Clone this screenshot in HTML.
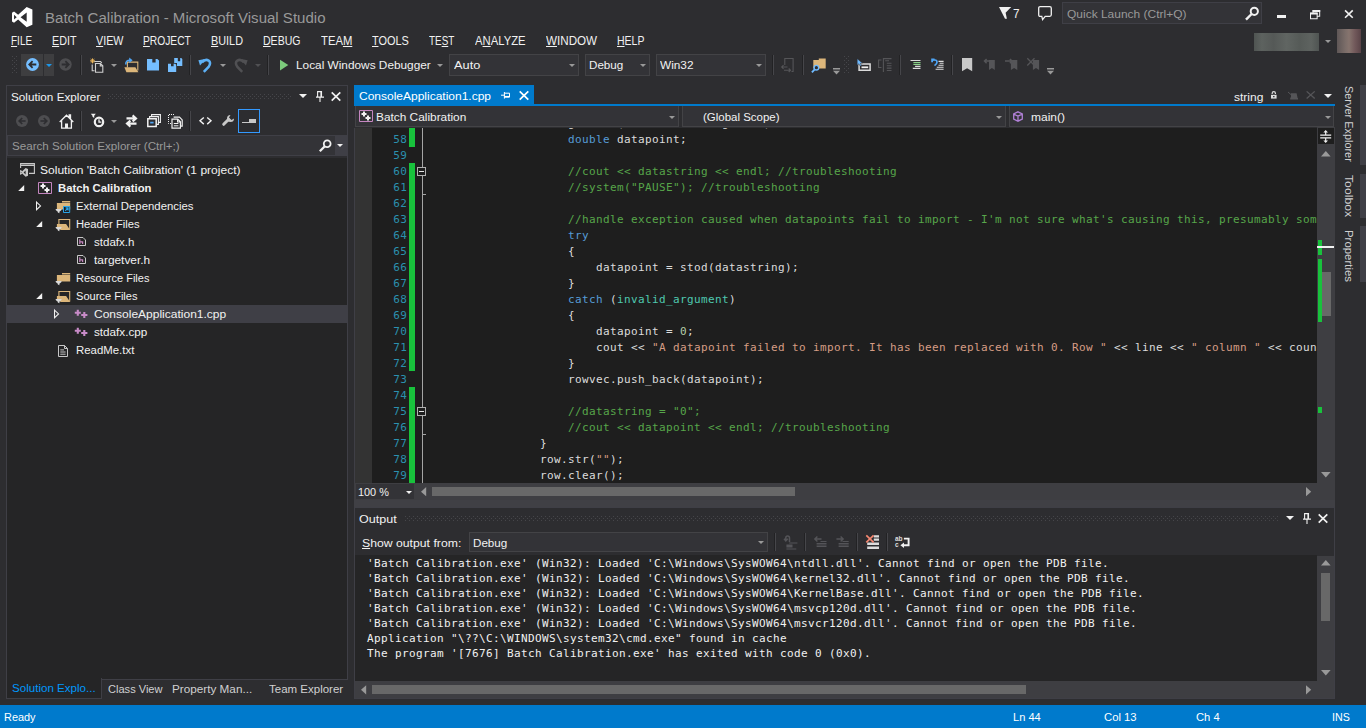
<!DOCTYPE html>
<html lang="en"><head><meta charset="utf-8"><title>Batch Calibration - Microsoft Visual Studio</title>
<style>
html,body{margin:0;padding:0;}
body{width:1366px;height:728px;overflow:hidden;background:#2d2d30;position:relative;font-family:"Liberation Sans", "DejaVu Sans", sans-serif;font-size:12px;color:#f1f1f1;}
.a{position:absolute;}
.t{position:absolute;white-space:nowrap;line-height:20px;height:20px;}
.b{position:absolute;box-sizing:border-box;}
svg{position:absolute;overflow:visible;}
.code{position:absolute;font-family:"DejaVu Sans Mono", "Liberation Mono", monospace;font-size:11px;letter-spacing:0.3775px;white-space:pre;color:#dcdcdc;}
.code div{height:16px;line-height:16px;}
.ln{color:#2b91af;}
.k{color:#569cd6;} .c{color:#57a64a;} .s{color:#d69d85;} .ty{color:#4ec9b0;} .n{color:#b5cea8;} .i{color:#c8c8c8;}
.out{position:absolute;font-family:"DejaVu Sans Mono", "Liberation Mono", monospace;font-size:11px;letter-spacing:0.3775px;white-space:pre;color:#f1f1f1;}
.out div{height:15px;line-height:15px;}
.grip{position:absolute;height:5px;background-image:radial-gradient(circle at 0.5px 0.5px,#46464a 0.6px,transparent 0.7px),radial-gradient(circle at 2.5px 2.5px,#46464a 0.6px,transparent 0.7px),radial-gradient(circle at 0.5px 4.5px,#46464a 0.6px,transparent 0.7px);background-size:4px 5px;}
.sep{position:absolute;width:1px;background:#222224;border-right:1px solid #46464a;}
.dd{position:absolute;width:0;height:0;border-left:3px solid transparent;border-right:3px solid transparent;border-top:3px solid #999;}
</style></head><body>

<svg style="left:11.8px;top:6.8px" width="20.4" height="20.3" viewBox="0 0 1 1" preserveAspectRatio="none"><path fill="#fff" fill-rule="evenodd" d="M.72 0L1 .12V.88L.72 1L.3 .62L.1 .78L0 .72V.28L.1 .22L.3 .38ZM.72 .27L.42 .5L.72 .73ZM.1 .38L.23 .5L.1 .62Z"/></svg>
<svg style="left:998.9px;top:7.1px" width="13" height="12" viewBox="0 0 13 12"><path fill="#f1f1f1" d="M0 0H12.2L6.6 5.8L7.9 11.8H6Z"/></svg>
<svg style="left:1038px;top:6px" width="14" height="15" viewBox="0 0 14 15"><path fill="none" stroke="#f1f1f1" stroke-width="1.3" d="M2.2.7H11.8Q13.3.7 13.3 2.2V8.8Q13.3 10.3 11.8 10.3H7.2L4.6 13.6L3.8 10.3H2.2Q.7 10.3 .7 8.8V2.2Q.7 .7 2.2 .7Z"/></svg>
<div class="b" style="left:1062px;top:2px;width:200px;height:22px;background:#333337;border:1px solid #3f3f46"></div>
<svg style="left:1245px;top:6px" width="15" height="15" viewBox="0 0 15 15"><circle cx="9.3" cy="5.3" r="3.6" fill="none" stroke="#f1f1f1" stroke-width="2"/><path stroke="#f1f1f1" stroke-width="2.4" d="M6.6 8 L1 13.6"/></svg>
<div class="a" style="left:1277px;top:15px;width:9.3px;height:3px;background:#f1f1f1"></div>
<svg style="left:1309.8px;top:9.6px" width="10.2" height="9.4" viewBox="0 0 12 11"><path fill="none" stroke="#f1f1f1" stroke-width="1.2" d="M.6 3.6H8.4V10.4H.6ZM3.6 3.5V.6H11.4V7.4H8.5"/><path stroke="#f1f1f1" stroke-width="2.2" d="M0 4.2H9M3 1.2H12"/></svg>
<svg style="left:1344.3px;top:9.8px" width="9.8" height="8.2" viewBox="0 0 11 10"><path stroke="#f1f1f1" stroke-width="2" d="M.8.5L10.2 9.5M10.2.5L.8 9.5"/></svg>
<div class="a" style="left:1254px;top:33px;width:65px;height:18px;background:linear-gradient(90deg,#4f5452,#5d625f 12%,#555957 30%,#606562 50%,#565b58 70%,#5e6360 88%,#4f5452)"></div>
<div class="dd" style="left:1324.6px;top:40.2px;border-width:3.3px 3.3px 0 3.3px"></div>
<div class="a" style="left:1337px;top:29px;width:24.3px;height:24px;background:linear-gradient(90deg,#5e5656,#7b6d69 35%,#86746e 50%,#71585a 75%,#5a4448)"></div>
<div class="grip" style="left:12px;top:56px;width:5px;height:18px;background-size:4px 4px"></div>
<div class="a" style="left:21px;top:54px;width:22px;height:22px;background:#3e3e40"></div>
<div class="a" style="left:44px;top:54px;width:10px;height:22px;background:#3e3e40"></div>
<svg style="left:25.5px;top:58.3px" width="13" height="13" viewBox="0 0 13 13"><circle cx="6.5" cy="6.5" r="6.4" fill="#75beff"/><path fill="none" stroke="#2d2d30" stroke-width="1.8" d="M10.3 6.5H3.5M6.6 3.2L3.3 6.5L6.6 9.8"/></svg>
<div class="dd" style="left:46px;top:64px;border-top-color:#1c97ea"></div>
<svg style="left:59.4px;top:58.3px" width="13" height="13" viewBox="0 0 13 13"><circle cx="6.5" cy="6.5" r="6.2" fill="#4d4d50"/><path fill="none" stroke="#2d2d30" stroke-width="1.8" d="M2.7 6.5H9.5M6.4 3.2L9.7 6.5L6.4 9.8"/></svg>
<div class="sep" style="left:80px;top:55px;height:20px"></div>
<svg style="left:89.5px;top:57.5px" width="14" height="15" viewBox="0 0 14 15"><path fill="none" stroke="#d0d0d0" stroke-width="1.1" d="M4.2 3.5H10.5L11.8 4.8M2.2 6.5V12.8H4.5M5.5 5.5H10.5L12.8 7.8V14.3H5.5ZM10.3 5.5V8H12.8"/><path stroke="#e8b35a" stroke-width="1" d="M0 2.9H5M2.5 .4V5.4M.7 1.1L4.3 4.7M4.3 1.1L.7 4.7"/></svg>
<div class="dd" style="left:111px;top:64px"></div>
<svg style="left:123.5px;top:57.5px" width="15" height="15" viewBox="0 0 15 15"><path fill="none" stroke="#dcb67a" stroke-width="1.1" d="M3.4 9.5V4.1H13.8V12.5"/><path fill="#dcb67a" d="M.4 9.3H11.4L14.4 14.3H2.4Z"/><path fill="none" stroke="#4fa5f5" stroke-width="1.6" d="M1.8 6.5Q1.5 2.2 6 2.2"/><path fill="#4fa5f5" d="M5.2 -.4L8.6 2.3L5.2 5Z"/></svg>
<svg style="left:147.2px;top:58.9px" width="12" height="11.6" viewBox="0 0 12 11.6"><path fill="#75beff" fill-rule="evenodd" d="M0 0H10.4L12 1.6V11.6H0ZM5.3 0V3.6H8.6V0Z"/></svg>
<svg style="left:168px;top:57.9px" width="15" height="14" viewBox="0 0 15 14"><path fill="#75beff" fill-rule="evenodd" d="M6.2 0H13.2L14.3 1.1V7.9H9V5H6.2ZM9.8 0V3.3H12.2V0Z"/><path fill="#75beff" fill-rule="evenodd" d="M0 5.7H7.2L8.2 6.7V13.9H0ZM3 5.7V8.3H5.6V5.7Z"/></svg>
<div class="sep" style="left:189px;top:55px;height:20px"></div>
<svg style="left:198px;top:57.5px" width="14" height="15" viewBox="0 0 14 15"><path fill="none" stroke="#5db0f5" stroke-width="2.5" d="M4 4.4Q7.4 .6 10.6 2.6Q13.4 4.8 10.8 8.6L5.8 13.8"/><path fill="#5db0f5" d="M.4 2.2L6.8 1L4.6 4.4L2 7.6Z"/></svg>
<div class="dd" style="left:220px;top:64px"></div>
<svg style="left:233.5px;top:57.5px" width="14" height="15" viewBox="0 0 14 15"><path fill="none" stroke="#505053" stroke-width="2.5" d="M10 4.4Q6.6 .6 3.4 2.6Q.6 4.8 3.2 8.6L8.2 13.8"/><path fill="#505053" d="M13.6 2.2L7.2 1L9.4 4.4L12 7.6Z"/></svg>
<div class="dd" style="left:255px;top:64px;border-top-color:#505053"></div>
<div class="sep" style="left:267px;top:55px;height:20px"></div>
<svg style="left:279.6px;top:59px" width="8.3" height="12.2" viewBox="0 0 10 13"><path fill="#7ccb7c" d="M0 0L10 6.5L0 13Z"/></svg>
<div class="dd" style="left:437px;top:64px"></div>
<div class="b" style="left:449px;top:54px;width:130px;height:22px;background:#333337;border:1px solid #434346"></div>
<div class="dd" style="left:569px;top:64px;border-top-color:#999"></div>
<div class="b" style="left:585px;top:54px;width:65px;height:22px;background:#333337;border:1px solid #434346"></div>
<div class="dd" style="left:640px;top:64px;border-top-color:#999"></div>
<div class="b" style="left:656px;top:54px;width:110px;height:22px;background:#333337;border:1px solid #434346"></div>
<div class="dd" style="left:756px;top:64px;border-top-color:#999"></div>
<div class="sep" style="left:772px;top:55px;height:20px"></div>
<svg style="left:780.5px;top:58px" width="14" height="15" viewBox="0 0 14 15"><path fill="none" stroke="#555558" stroke-width="1.1" d="M3.8 7V.5H12.1V13.5H10.5M.7 9H6.5M2.5 7.2L.7 9L2.5 10.8M3 12.2H9.5M7.7 10.5L9.5 12.2L7.7 14"/></svg>
<div class="sep" style="left:802px;top:55px;height:20px"></div>
<svg style="left:810.5px;top:57.5px" width="16" height="16" viewBox="0 0 16 16"><path fill="#dcb67a" d="M2.3 2.1H7.8V.5H14.7V10.5H2.3Z"/><circle cx="5.4" cy="9.7" r="2.3" fill="#2d2d30" stroke="#6fbaff" stroke-width="1.4"/><path stroke="#6fbaff" stroke-width="1.9" d="M3.7 11.4L.9 14.3"/></svg>
<svg style="left:832.6px;top:68px" width="7" height="6.5" viewBox="0 0 7 6.5"><path fill="#999" d="M0 0H7V1.5H0ZM0 2.8H7L3.5 6.4Z"/></svg>
<div class="grip" style="left:844px;top:56px;width:5px;height:18px;background-size:4px 4px"></div>
<svg style="left:855.5px;top:58px" width="15" height="14" viewBox="0 0 15 14"><path fill="none" stroke="#dcdcdc" stroke-width="1.5" d="M3.1 6H14.1V12.2H3.1Z"/><path fill="#f1f1f1" d="M5.5 8.4H12.2V10.2H5.5Z"/><path fill="#6fbaff" stroke="#2d2d30" stroke-width=".5" d="M1.2.8V7.2L2.9 5.8L4.2 8.1L5.5 7.4L4.3 5.2L6.4 5Z"/></svg>
<svg style="left:878px;top:58px" width="15" height="14" viewBox="0 0 15 14"><path fill="none" stroke="#555558" stroke-width="1.1" d="M3.5 2H.6V9.5H3.5M5.4 0V14M5.4 .6H13.5M7.2 2.7H11M8.8 5.3H13.5M8.8 7.7H13.5M8.8 10.1H13.5M8.8 12.5H13.5"/></svg>
<div class="sep" style="left:899px;top:55px;height:20px"></div>
<svg style="left:909.5px;top:59px" width="11" height="11" viewBox="0 0 11 11"><path stroke="#dcdcdc" stroke-width="1.1" d="M.5 1.5H10.5M5.1 7.4H10.5M2.8 9.4H10.5"/><path stroke="#8dd28a" stroke-width="1.1" d="M3.4 3.5H10.5M3.4 5.4H10.5"/></svg>
<svg style="left:930.5px;top:58px" width="13" height="13" viewBox="0 0 13 13"><path stroke="#dcdcdc" stroke-width="1.1" d="M7.5 3.4H12.6M8.6 5.2H12.6M7.5 7.2H12.6M5.8 9.3H12.6M4.6 11.3H12.6"/><path fill="none" stroke="#4fa5f5" stroke-width="1.7" d="M1.5 2H3.8Q6 2 6 4.2Q6 5.8 3.5 7.6"/><path fill="#4fa5f5" d="M.2 .6H3.6V2.4H2V4.2H.2Z"/></svg>
<div class="sep" style="left:951px;top:55px;height:20px"></div>
<svg style="left:961.8px;top:58px" width="10.2" height="13.3" viewBox="0 0 10.2 13.3"><path fill="#c8c8c8" d="M0 0H10.2V13.3L5.1 10.2L0 13.3Z"/></svg>
<svg style="left:984px;top:58px" width="12" height="13" viewBox="0 0 12 13"><path fill="#555558" d="M5 2H10.8V12.1L7.9 10L5 12.1Z"/><path fill="none" stroke="#555558" stroke-width="1.5" d="M.5 3.1H7M2.6 1L.5 3.1L2.6 5.2"/></svg>
<svg style="left:1004.8px;top:58px" width="13" height="13" viewBox="0 0 13 13"><path fill="#555558" d="M5.9 2H12.3V12.1L9.1 10L5.9 12.1Z"/><path fill="none" stroke="#555558" stroke-width="1.5" d="M0 3.1H7M4.9 1L7 3.1L4.9 5.2"/></svg>
<svg style="left:1027px;top:58px" width="13" height="13" viewBox="0 0 13 13"><path fill="#555558" d="M5.9 2H12.1V12.1L9 10L5.9 12.1Z"/><path fill="none" stroke="#555558" stroke-width="1.3" d="M.3 .3L7.5 7.5M7.5 .3L.3 7.5"/></svg>
<svg style="left:1047.3px;top:68px" width="7" height="6.5" viewBox="0 0 7 6.5"><path fill="#999" d="M0 0H7V1.5H0ZM0 2.8H7L3.5 6.4Z"/></svg>
<div class="b" style="left:6px;top:85px;width:342px;height:594.5px;border:1px solid #3f3f46;background:#2d2d30"></div>
<div class="a" style="left:7px;top:158px;width:340px;height:520.5px;background:#252526"></div>
<div class="grip" style="left:108px;top:94px;width:183px"></div>
<div class="dd" style="left:299px;top:94px;border-width:4px 4px 0 4px;border-top-color:#f1f1f1"></div>
<svg style="left:315.6px;top:91.3px" width="8" height="11" viewBox="0 0 8 11"><path fill="none" stroke="#f1f1f1" stroke-width="1.1" d="M1.6 6V.6H5.5V6M0 6.1H8M4 6.5V11"/><path stroke="#f1f1f1" stroke-width="1.6" d="M5.2 .6V6"/></svg>
<svg style="left:331px;top:91.8px" width="10" height="9" viewBox="0 0 10 9"><path stroke="#f1f1f1" stroke-width="1.7" d="M.7.4L9.3 8.6M9.3.4L.7 8.6"/></svg>
<svg style="left:16px;top:115px" width="12" height="12" viewBox="0 0 12 12"><circle cx="6" cy="6" r="6" fill="#4d4d50"/><path fill="none" stroke="#2d2d30" stroke-width="1.7" d="M9.6 6H3.4M6.2 3L3.2 6L6.2 9"/></svg>
<svg style="left:38px;top:115px" width="12" height="12" viewBox="0 0 12 12"><circle cx="6" cy="6" r="6" fill="#4d4d50"/><path fill="none" stroke="#2d2d30" stroke-width="1.7" d="M2.4 6H8.6M5.8 3L8.8 6L5.8 9"/></svg>
<svg style="left:58.5px;top:113.5px" width="15" height="15" viewBox="0 0 15 15"><path fill="none" stroke="#f1f1f1" stroke-width="1.3" d="M.7 8L7.5 1.2L14.3 8M2.6 6.5V14.2H12.4V6.5M10.2 3.6V1H11.5V4.9"/><path fill="#f1f1f1" d="M6 9.5H9V14H6Z"/></svg>
<div class="sep" style="left:80px;top:111px;height:20px"></div>
<svg style="left:91px;top:114px" width="14" height="14" viewBox="0 0 14 14"><circle cx="8" cy="7.9" r="4.2" fill="none" stroke="#f1f1f1" stroke-width="2.2"/><path fill="none" stroke="#f1f1f1" stroke-width="1.3" d="M8 5.2V8.2H10.4"/><path fill="#f1f1f1" d="M-.2 -.2H4.8L3.2 1.7V4L1.5 2.8V1.7Z"/></svg>
<div class="dd" style="left:111px;top:120px"></div>
<svg style="left:124.5px;top:115px" width="13" height="12" viewBox="0 0 13 12"><path fill="none" stroke="#f1f1f1" stroke-width="2.1" d="M1.5 3.4H11M7.6 .4L11 3.4L7.6 6.4M11.5 8.6H2M5.4 5.6L2 8.6L5.4 11.6"/></svg>
<svg style="left:146.8px;top:114px" width="14" height="14" viewBox="0 0 14 14"><path fill="none" stroke="#f1f1f1" stroke-width="1.5" d="M.8 4.8H9.2V12.4H.8Z"/><path fill="none" stroke="#f1f1f1" stroke-width="1.1" d="M2.6 4.3V2.6H11.4V10.4H9.7M4.6 2.3V.6H13.4V8.4H11.7"/><path stroke="#4fa5f5" stroke-width="1.7" d="M3.2 8.6H6.6"/></svg>
<svg style="left:167.5px;top:113.5px" width="15" height="15" viewBox="0 0 15 15"><path fill="none" stroke="#f1f1f1" stroke-width="1" stroke-dasharray="1 1" d="M3 9.5H.5V.5H6.5"/><path fill="none" stroke="#f1f1f1" stroke-width="1.2" d="M5.6 3.2H11.5L14.2 5.9V12.2H13M4 14.2V5.2H9.8L12.4 7.8V14.2ZM9.6 5.3V8H12.3"/><path stroke="#f1f1f1" stroke-width="1" d="M5.8 9.5H10.4M5.8 11.8H10.4"/></svg>
<div class="sep" style="left:189px;top:111px;height:20px"></div>
<svg style="left:198.8px;top:117px" width="13" height="8" viewBox="0 0 13 8"><path fill="none" stroke="#f1f1f1" stroke-width="1.4" d="M4.8.5L1 3.8L4.8 7.1M8.2.5L12 3.8L8.2 7.1"/></svg>
<svg style="left:221.5px;top:115px" width="12" height="11" viewBox="0 0 12 11"><path stroke="#c8c8c8" stroke-width="3" stroke-linecap="round" d="M1.7 9.3L6.5 4.5"/><path fill="#c8c8c8" d="M8.5 0A3.5 3.5 0 1 0 12 3.5L9.5 5L7 2.5Z"/></svg>
<div class="b" style="left:238px;top:109px;width:22px;height:24px;border:1px solid #3399ff"></div>
<div class="a" style="left:242px;top:122px;width:14px;height:1px;background:#c8c8c8"></div><div class="a" style="left:248.7px;top:119.2px;width:7.3px;height:3.8px;background:#c8c8c8"></div>
<div class="b" style="left:7px;top:135px;width:340px;height:21px;background:#333337;border:1px solid #3f3f46"></div>
<div class="a" style="left:335px;top:136px;width:12px;height:19px;background:#3f3f46"></div>
<svg style="left:319px;top:139px" width="13" height="13" viewBox="0 0 13 13"><circle cx="8.2" cy="4.8" r="3.4" fill="none" stroke="#f1f1f1" stroke-width="1.8"/><path stroke="#f1f1f1" stroke-width="2.3" d="M5.8 7.2L.8 12.2"/></svg>
<div class="dd" style="left:337px;top:144px;border-top-color:#f1f1f1"></div>
<div class="a" style="left:7px;top:305px;width:340px;height:18px;background:#3f3f46"></div>
<svg style="left:20px;top:163.3px" width="15" height="14" viewBox="0 0 15 14"><path fill="none" stroke="#c8c8c8" stroke-width="1.1" d="M.6 5V.6H14.4V10.4H9M.5 2.4H14.5"/><path fill="#c8c8c8" fill-rule="evenodd" d="M5.6 5L8 6V12.8L5.6 13.8L2.2 10.6L.8 11.8L0 11.4V7.4L.8 7L2.2 8.2ZM5.6 7.4L3.6 9.4L5.6 11.4ZM.8 8.6L1.6 9.4L.8 10.2Z"/></svg>
<svg style="left:17.8px;top:185px" width="6.4" height="6" viewBox="0 0 7 7"><path fill="#f1f1f1" d="M7 0V7H0Z"/></svg>
<svg style="left:38px;top:182px" width="14" height="12" viewBox="0 0 14 12"><path fill="none" stroke="#c586c0" stroke-width="1" d="M.5.5H13.5V11.5H.5Z"/><path stroke="#f1f1f1" stroke-width="2" d="M2.5 4H7.5M5 1.5V6.5M6.5 8H11.5M9 5.5V10.5"/></svg>
<svg style="left:35.8px;top:200.8px" width="5.2" height="9.8" viewBox="0 0 5 9"><path fill="none" stroke="#f1f1f1" stroke-width="1" d="M.5.8L4.4 4.5L.5 8.2Z"/></svg>
<svg style="left:56px;top:199px" width="15" height="14" viewBox="0 0 15 14"><path fill="#dcb67a" d="M6 2H14.2V3.4H6ZM.9 3.9H14.2V10.4H.9Z"/><path fill="#1e1e1e" stroke="#2aa5e8" stroke-width="1" d="M7.5 7.5H13.7V13.5H7.5Z"/><path fill="none" stroke="#2aa5e8" stroke-width="1.1" d="M9.2 11.8L12 9M9.6 8.9H12.1V11.4"/><path fill="#dadada" d="M-.3 10H5.5V11.1L3.4 12.8V14.2L1.8 13.5V12.8L-.3 11.1Z"/></svg>
<svg style="left:35.8px;top:221px" width="6.4" height="6" viewBox="0 0 7 7"><path fill="#f1f1f1" d="M7 0V7H0Z"/></svg>
<svg style="left:56px;top:217px" width="15" height="14" viewBox="0 0 15 14"><path fill="none" stroke="#dcb67a" stroke-width="1.1" d="M2.9 7.5V2.5H13.7V12.5"/><path fill="#dcb67a" d="M.9 6.9H10.1L14.2 13H4.5L3 10.3H.9Z"/><path fill="#dadada" d="M-.3 10H5.5V11.1L3.4 12.8V14.2L1.8 13.5V12.8L-.3 11.1Z"/></svg>
<svg style="left:76.7px;top:237.3px" width="9" height="9" viewBox="0 0 9 9"><path fill="none" stroke="#c8c8c8" stroke-width="1" d="M.5.5H6L8.5 3V8.5H.5Z"/><path fill="none" stroke="#c586c0" stroke-width="1.2" d="M2.8 2.2V7M2.8 4.8H5.6V7"/></svg>
<svg style="left:76.7px;top:255.3px" width="9" height="9" viewBox="0 0 9 9"><path fill="none" stroke="#c8c8c8" stroke-width="1" d="M.5.5H6L8.5 3V8.5H.5Z"/><path fill="none" stroke="#c586c0" stroke-width="1.2" d="M2.8 2.2V7M2.8 4.8H5.6V7"/></svg>
<svg style="left:56px;top:271px" width="15" height="14" viewBox="0 0 15 14"><path fill="#dcb67a" d="M6 2H14.2V3.4H6ZM.9 3.9H14.2V10.4H.9Z"/><path fill="#dadada" d="M-.3 10H5.5V11.1L3.4 12.8V14.2L1.8 13.5V12.8L-.3 11.1Z"/></svg>
<svg style="left:35.8px;top:293px" width="6.4" height="6" viewBox="0 0 7 7"><path fill="#f1f1f1" d="M7 0V7H0Z"/></svg>
<svg style="left:56px;top:289px" width="15" height="14" viewBox="0 0 15 14"><path fill="none" stroke="#dcb67a" stroke-width="1.1" d="M2.9 7.5V2.5H13.7V12.5"/><path fill="#dcb67a" d="M.9 6.9H10.1L14.2 13H4.5L3 10.3H.9Z"/><path fill="#dadada" d="M-.3 10H5.5V11.1L3.4 12.8V14.2L1.8 13.5V12.8L-.3 11.1Z"/></svg>
<svg style="left:53.8px;top:308.8px" width="5.2" height="9.8" viewBox="0 0 5 9"><path fill="none" stroke="#f1f1f1" stroke-width="1" d="M.5.8L4.4 4.5L.5 8.2Z"/></svg>
<svg style="left:75px;top:310px" width="13" height="8" viewBox="0 0 13 8"><path stroke="#c88bc8" stroke-width="2.1" d="M-.2 2.8H5.8M2.8 -.2V5.8M6.2 5H12.4M9.3 1.9V8.1"/></svg>
<svg style="left:75px;top:328px" width="13" height="8" viewBox="0 0 13 8"><path stroke="#c88bc8" stroke-width="2.1" d="M-.2 2.8H5.8M2.8 -.2V5.8M6.2 5H12.4M9.3 1.9V8.1"/></svg>
<svg style="left:58.3px;top:344.5px" width="10" height="13" viewBox="0 0 10 13"><path fill="none" stroke="#c8c8c8" stroke-width="1" d="M.5.5H6.5L9.5 3.5V11.5H.5ZM6.5 .5V3.5H9.5"/><path stroke="#c8c8c8" stroke-width="1" d="M2.3 4.9H6M2.3 7H7.6M2.3 9.2H7.6"/></svg>
<div class="b" style="left:6px;top:678px;width:96px;height:20.6px;background:#252526;border:1px solid #3f3f46;border-top:none"></div>
<div class="a" style="left:354px;top:85px;width:180px;height:19px;background:#007acc"></div>
<div class="a" style="left:354px;top:104px;width:981px;height:2px;background:#007acc"></div>
<svg style="left:501px;top:92.3px" width="9" height="7" viewBox="0 0 9 7"><path fill="none" stroke="#fff" stroke-width="1" d="M3.5 1.2H8.5V5H3.5M3.4 0V6.6M0 3.2H3.4"/><path stroke="#fff" stroke-width="1.5" d="M3.5 4.7H8.5"/></svg>
<svg style="left:519.2px;top:91.2px" width="10" height="9" viewBox="0 0 10 9"><path stroke="#fff" stroke-width="1.7" d="M.7.4L9.3 8.6M9.3.4L.7 8.6"/></svg>
<svg style="left:1270.8px;top:90.6px" width="6" height="8" viewBox="0 0 6 8"><path fill="#dcdcdc" d="M0 3.8H5.6V7.6H0Z"/><path fill="none" stroke="#dcdcdc" stroke-width="1.2" d="M1.2 2.9V2.2Q1.2.7 2.8.7T4.4 2.2V2.9"/><path fill="#2d2d30" d="M2.1 4.9H3.5V6.3H2.1Z"/></svg>
<svg style="left:1288px;top:92.3px" width="10" height="8" viewBox="0 0 10 8"><path fill="#555558" d="M3 1.2H8.6L9.6 6H10V7.4H2.2V6L3 5Z"/><path stroke="#555558" stroke-width="1" d="M0 0L4 3.5"/></svg>
<svg style="left:1306.4px;top:91.4px" width="9.4" height="7.8" viewBox="0 0 10 9" preserveAspectRatio="none"><path stroke="#555558" stroke-width="1.5" d="M.7.4L9.3 8.6M9.3.4L.7 8.6"/></svg>
<div class="dd" style="left:1324px;top:94px;border-width:4px 4px 0 4px;border-top-color:#f1f1f1"></div>
<div class="a" style="left:354px;top:106px;width:981px;height:22px;background:#2d2d30"></div>
<div class="b" style="left:355px;top:106px;width:324px;height:21px;background:#333337;border:1px solid #434346;border-top:none"></div>
<div class="dd" style="left:669px;top:116px"></div>
<div class="b" style="left:682px;top:106px;width:324px;height:21px;background:#333337;border:1px solid #434346;border-top:none"></div>
<div class="dd" style="left:996px;top:116px"></div>
<div class="b" style="left:1009px;top:106px;width:325px;height:21px;background:#333337;border:1px solid #434346;border-top:none"></div>
<div class="dd" style="left:1325.2px;top:116px"></div>
<svg style="left:359px;top:110px" width="14" height="12" viewBox="0 0 14 12"><path fill="none" stroke="#c586c0" stroke-width="1" d="M.5.5H13.5V11.5H.5Z"/><path stroke="#f1f1f1" stroke-width="2" d="M2.5 4H7.5M5 1.5V6.5M6.5 8H11.5M9 5.5V10.5"/></svg>
<svg style="left:1013px;top:110.5px" width="10" height="11" viewBox="0 0 10 11"><path fill="none" stroke="#b180d7" stroke-width="1.3" d="M5 .8L9.3 3V8L5 10.2L.7 8V3ZM.7 3L5 5.2L9.3 3M5 5.2V10.2"/></svg>
<div class="a" style="left:354px;top:127px;width:963px;height:356px;background:#1e1e1e;overflow:hidden">
<div class="a" style="left:0;top:0;width:1px;height:356px;background:#3f3f46"></div><div class="a" style="left:1px;top:0;width:17px;height:356px;background:#333333"></div>
<div class="a" style="left:55.1px;top:0px;width:5.5px;height:20px;background:#18c23c"></div>
<div class="a" style="left:55.1px;top:36px;width:5.5px;height:208px;background:#18c23c"></div>
<div class="a" style="left:55.1px;top:260px;width:5.5px;height:96px;background:#18c23c"></div>
<div class="a" style="left:68px;top:0;width:1px;height:356px;background:#a5a5a5"></div>
<div class="b" style="left:63px;top:40px;width:9px;height:9px;background:#1e1e1e;border:1px solid #b0b0b0"></div><div class="a" style="left:65px;top:44px;width:5px;height:1px;background:#e6e6e6"></div>
<div class="b" style="left:63px;top:280px;width:9px;height:9px;background:#1e1e1e;border:1px solid #b0b0b0"></div><div class="a" style="left:65px;top:284px;width:5px;height:1px;background:#e6e6e6"></div>
<div class="a" style="left:69px;top:67px;width:3px;height:1px;background:#a5a5a5"></div>
<div class="a" style="left:69px;top:307px;width:3px;height:1px;background:#a5a5a5"></div>
<div class="code ln" style="left:38.9px;top:-11px;width:14.4px;text-align:right"><div>57</div><div>58</div><div>59</div><div>60</div><div>61</div><div>62</div><div>63</div><div>64</div><div>65</div><div>66</div><div>67</div><div>68</div><div>69</div><div>70</div><div>71</div><div>72</div><div>73</div><div>74</div><div>75</div><div>76</div><div>77</div><div>78</div><div>79</div></div>
<div class="code" style="left:74px;top:-11px"><div>                    getline(row, datastring, <span class="s">' '</span>);</div><div>                    <span class="k">double</span> datapoint;</div><div></div><div>                    <span class="c">//cout &lt;&lt; datastring &lt;&lt; endl; //troubleshooting</span></div><div>                    <span class="c">//system("PAUSE"); //troubleshooting</span></div><div></div><div>                    <span class="c">//handle exception caused when datapoints fail to import - I'm not sure what's causing this, presumably something</span></div><div>                    <span class="k">try</span></div><div>                    {</div><div>                        datapoint = stod(datastring);</div><div>                    }</div><div>                    <span class="k">catch</span> (<span class="ty">invalid_argument</span>)</div><div>                    {</div><div>                        datapoint = <span class="n">0</span>;</div><div>                        cout &lt;&lt; <span class="s">"A datapoint failed to import. It has been replaced with 0. Row "</span> &lt;&lt; line &lt;&lt; <span class="s">" column "</span> &lt;&lt; count &lt;&lt; endl;</div><div>                    }</div><div>                    rowvec.push_back(datapoint);</div><div></div><div>                    <span class="c">//datastring = "0";</span></div><div>                    <span class="c">//cout &lt;&lt; datapoint &lt;&lt; endl; //troubleshooting</span></div><div>                }</div><div>                row.str(<span class="s">""</span>);</div><div>                row.clear();</div></div>
</div>
<div class="a" style="left:354px;top:127px;width:981px;height:1px;background:#2d2d30"></div>
<div class="a" style="left:1317px;top:127px;width:18px;height:356px;background:#3e3e42"></div>
<div class="a" style="left:1318px;top:128px;width:16px;height:16px;background:#1e1e1e"></div>
<svg style="left:1319.8px;top:130px" width="11.4" height="13" viewBox="0 0 11 13"><path fill="#f1f1f1" d="M0 4.6H11V5.7H0ZM0 7.3H11V8.4H0ZM5.5 0L7.8 2.6H6.1V4.6H4.9V2.6H3.2ZM5.5 13L7.8 10.4H6.1V8.4H4.9V10.4H3.2Z"/></svg>
<svg style="left:1320.8px;top:150.8px" width="9.6" height="5.5" viewBox="0 0 9 5" preserveAspectRatio="none"><path fill="#999" d="M4.5 0L9 5H0Z"/></svg>
<svg style="left:1320.8px;top:471.8px" width="9.6" height="5.4" viewBox="0 0 9 5" preserveAspectRatio="none"><path fill="#999" d="M4.5 5L9 0H0Z"/></svg>
<div class="a" style="left:1322px;top:272px;width:8.5px;height:44px;background:#686868"></div>
<div class="a" style="left:1318.3px;top:240.4px;width:3.7px;height:15px;background:#18c23c"></div>
<div class="a" style="left:1318.3px;top:259px;width:3.7px;height:63px;background:#18c23c"></div>
<div class="a" style="left:1318.3px;top:407px;width:3.7px;height:5.6px;background:#18c23c"></div>
<div class="a" style="left:1317px;top:246px;width:17px;height:2px;background:#f1f1f1"></div>
<div class="a" style="left:354px;top:483px;width:981px;height:17px;background:#3e3e42"></div>
<div class="a" style="left:354px;top:500px;width:981px;height:8px;background:#404045"></div>
<div class="a" style="left:356px;top:484px;width:58px;height:15px;background:#333337"></div>
<div class="dd" style="left:406px;top:491px;border-top-color:#f1f1f1;border-width:3.3px 3.1px 0 3.1px"></div>
<svg style="left:421px;top:487px" width="5.2" height="9.4" viewBox="0 0 5 9"><path fill="#999" d="M0 4.5L5 0V9Z"/></svg>
<svg style="left:1306px;top:487px" width="5.2" height="9.4" viewBox="0 0 5 9"><path fill="#999" d="M5 4.5L0 0V9Z"/></svg>
<div class="a" style="left:432px;top:487px;width:363px;height:9px;background:#686868"></div>
<div class="b" style="left:354px;top:507px;width:981px;height:192px;background:#2d2d30;border:1px solid #3f3f46"></div>
<div class="grip" style="left:405px;top:516px;width:874px"></div>
<div class="dd" style="left:1286px;top:516px;border-width:4px 4px 0 4px;border-top-color:#f1f1f1"></div>
<svg style="left:1302.8px;top:513.3px" width="8" height="11" viewBox="0 0 8 11"><path fill="none" stroke="#f1f1f1" stroke-width="1.1" d="M1.6 6V.6H5.5V6M0 6.1H8M4 6.5V11"/><path stroke="#f1f1f1" stroke-width="1.6" d="M5.2 .6V6"/></svg>
<svg style="left:1318.2px;top:513.6px" width="10" height="9" viewBox="0 0 10 9"><path stroke="#f1f1f1" stroke-width="1.7" d="M.7.4L9.3 8.6M9.3.4L.7 8.6"/></svg>
<div class="b" style="left:468.5px;top:532px;width:299px;height:20px;background:#333337;border:1px solid #434346"></div>
<div class="dd" style="left:757.5px;top:541px;border-top-color:#999"></div>
<div class="sep" style="left:774px;top:533px;height:18px"></div>
<svg style="left:783.5px;top:534.5px" width="14" height="15" viewBox="0 0 14 15"><path fill="#545458" d="M5.2 7.5H13.4V8.5H5.2ZM2.4 9.6H8.5V12.4H2.4ZM2.4 13.5H12.3V14.5H2.4Z"/><path fill="none" stroke="#545458" stroke-width="1.5" d="M5.5 7V3Q5.5 .9 3.6 .9Q1.8 .9 1.8 3V5.5M0 3.8L1.8 5.8L3.8 3.8"/></svg>
<div class="sep" style="left:804px;top:533px;height:18px"></div>
<svg style="left:813.5px;top:536px" width="13" height="11" viewBox="0 0 13 11"><path fill="none" stroke="#545458" stroke-width="1.4" d="M7.5 3H1M3.4 .4L.8 3L3.4 5.6"/><path fill="#545458" d="M6.5 4.9H12.5V5.9H6.5ZM2.6 7.1H12.5V8.6H2.6ZM2.6 9.6H12.5V11H2.6Z"/></svg>
<svg style="left:835.5px;top:536px" width="13" height="11" viewBox="0 0 13 11"><path fill="none" stroke="#545458" stroke-width="1.4" d="M.4 3H7M4.6 .4L7.2 3L4.6 5.6"/><path fill="#545458" d="M6.4 4.9H12.7V5.9H6.4ZM2.6 7.1H12.7V8.6H2.6ZM2.6 9.6H12.7V11H2.6Z"/></svg>
<div class="sep" style="left:856px;top:533px;height:18px"></div>
<svg style="left:866px;top:535px" width="13" height="15" viewBox="0 0 13 15"><path fill="#dcdcdc" d="M7.8 .3H13V2.4H7.8ZM7.8 3.6H13V5.8H7.8ZM1.2 7.5H13V9.9H1.2ZM1.2 11.6H13V14.1H1.2Z"/><path stroke="#f48771" stroke-width="1.7" d="M.3 .4L7.6 7.4M7.6 .4L.3 7.4"/></svg>
<div class="sep" style="left:886px;top:533px;height:18px"></div>
<svg style="left:894.5px;top:536px" width="15" height="12" viewBox="0 0 15 12"><path fill="none" stroke="#f1f1f1" stroke-width="1.9" d="M8.9 2.6H13.6V9.2H8"/><path fill="#f1f1f1" d="M5.4 9.2L9 6.5V11.9Z"/><text x="0" y="4.6" font-size="6.5" font-weight="bold" fill="#dcdcdc" font-family="Liberation Sans, sans-serif">ab</text><text x="0" y="10.6" font-size="6.5" font-weight="bold" fill="#dcdcdc" font-family="Liberation Sans, sans-serif">c</text></svg>
<div class="a" style="left:355px;top:555px;width:962px;height:126px;background:#252526;overflow:hidden">
<div class="out" style="left:12.1px;top:0.5px"><div>&#x27;Batch Calibration.exe&#x27; (Win32): Loaded &#x27;C:\Windows\SysWOW64\ntdll.dll&#x27;. Cannot find or open the PDB file.</div><div>&#x27;Batch Calibration.exe&#x27; (Win32): Loaded &#x27;C:\Windows\SysWOW64\kernel32.dll&#x27;. Cannot find or open the PDB file.</div><div>&#x27;Batch Calibration.exe&#x27; (Win32): Loaded &#x27;C:\Windows\SysWOW64\KernelBase.dll&#x27;. Cannot find or open the PDB file.</div><div>&#x27;Batch Calibration.exe&#x27; (Win32): Loaded &#x27;C:\Windows\SysWOW64\msvcp120d.dll&#x27;. Cannot find or open the PDB file.</div><div>&#x27;Batch Calibration.exe&#x27; (Win32): Loaded &#x27;C:\Windows\SysWOW64\msvcr120d.dll&#x27;. Cannot find or open the PDB file.</div><div>Application &quot;\??\C:\WINDOWS\system32\cmd.exe&quot; found in cache</div><div>The program &#x27;[7676] Batch Calibration.exe&#x27; has exited with code 0 (0x0).</div></div>
</div>
<div class="a" style="left:1317px;top:556px;width:17px;height:125px;background:#3e3e42"></div>
<svg style="left:1320.8px;top:560.4px" width="9.6" height="5.5" viewBox="0 0 9 5" preserveAspectRatio="none"><path fill="#999" d="M4.5 0L9 5H0Z"/></svg>
<svg style="left:1320.8px;top:669.7px" width="9.6" height="5.4" viewBox="0 0 9 5" preserveAspectRatio="none"><path fill="#999" d="M4.5 5L9 0H0Z"/></svg>
<div class="a" style="left:1321px;top:573px;width:9px;height:48px;background:#686868"></div>
<div class="a" style="left:355px;top:681px;width:979px;height:17px;background:#3e3e42"></div>
<svg style="left:361px;top:684.8px" width="5.2" height="9.6" viewBox="0 0 5 9"><path fill="#999" d="M0 4.5L5 0V9Z"/></svg>
<svg style="left:1306px;top:684.8px" width="5.2" height="9.6" viewBox="0 0 5 9"><path fill="#999" d="M5 4.5L0 0V9Z"/></svg>
<div class="a" style="left:371.7px;top:685px;width:654.3px;height:9px;background:#686868"></div>
<div class="a" style="left:1360px;top:85px;width:6px;height:80px;background:#3f3f46"></div>
<div class="a" style="left:1360px;top:174px;width:6px;height:44px;background:#3f3f46"></div>
<div class="a" style="left:1360px;top:226px;width:6px;height:56px;background:#3f3f46"></div>
<div class="a" style="left:0;top:705px;width:1366px;height:23px;background:#007acc"></div>
<div class="t" style="left:44.5px;top:7.8px;font-size:15.4px;color:#999;transform-origin:0 50%;transform:scaleX(0.9769);">Batch Calibration - Microsoft Visual Studio</div>
<div class="t" style="left:1013px;top:3.5px;font-size:12.5px;color:#f1f1f1;transform-origin:0 50%;transform:scaleX(0.9348);">7</div>
<div class="t" style="left:1067px;top:3.5px;font-size:11.7px;color:#999;transform-origin:0 50%;transform:scaleX(1.0249);">Quick Launch (Ctrl+Q)</div>
<div class="t" style="left:11px;top:31px;font-size:12.6px;color:#f1f1f1;transform-origin:0 50%;transform:scaleX(0.7930);"><u>F</u>ILE</div>
<div class="t" style="left:52px;top:31px;font-size:12.6px;color:#f1f1f1;transform-origin:0 50%;transform:scaleX(0.8536);"><u>E</u>DIT</div>
<div class="t" style="left:96px;top:31px;font-size:12.6px;color:#f1f1f1;transform-origin:0 50%;transform:scaleX(0.8540);"><u>V</u>IEW</div>
<div class="t" style="left:143px;top:31px;font-size:12.6px;color:#f1f1f1;transform-origin:0 50%;transform:scaleX(0.8132);"><u>P</u>ROJECT</div>
<div class="t" style="left:211px;top:31px;font-size:12.6px;color:#f1f1f1;transform-origin:0 50%;transform:scaleX(0.8623);"><u>B</u>UILD</div>
<div class="t" style="left:263px;top:31px;font-size:12.6px;color:#f1f1f1;transform-origin:0 50%;transform:scaleX(0.8368);"><u>D</u>EBUG</div>
<div class="t" style="left:320.6px;top:31px;font-size:12.6px;color:#f1f1f1;transform-origin:0 50%;transform:scaleX(0.8943);">TEA<u>M</u></div>
<div class="t" style="left:372px;top:31px;font-size:12.6px;color:#f1f1f1;transform-origin:0 50%;transform:scaleX(0.8689);"><u>T</u>OOLS</div>
<div class="t" style="left:429.2px;top:31px;font-size:12.6px;color:#f1f1f1;transform-origin:0 50%;transform:scaleX(0.7856);">TE<u>S</u>T</div>
<div class="t" style="left:475.3px;top:31px;font-size:12.6px;color:#f1f1f1;transform-origin:0 50%;transform:scaleX(0.8958);">A<u>N</u>ALYZE</div>
<div class="t" style="left:545.9px;top:31px;font-size:12.6px;color:#f1f1f1;transform-origin:0 50%;transform:scaleX(0.9246);"><u>W</u>INDOW</div>
<div class="t" style="left:617.1px;top:31px;font-size:12.6px;color:#f1f1f1;transform-origin:0 50%;transform:scaleX(0.8323);"><u>H</u>ELP</div>
<div class="t" style="left:296.2px;top:54.5px;font-size:11.7px;color:#f1f1f1;transform-origin:0 50%;transform:scaleX(1.0121);">Local Windows Debugger</div>
<div class="t" style="left:453.7px;top:54.5px;font-size:11.7px;color:#f1f1f1;transform-origin:0 50%;transform:scaleX(1.0937);">Auto</div>
<div class="t" style="left:589.4px;top:54.5px;font-size:11.7px;color:#f1f1f1;transform-origin:0 50%;transform:scaleX(0.9956);">Debug</div>
<div class="t" style="left:660px;top:54.5px;font-size:11.7px;color:#f1f1f1;transform-origin:0 50%;transform:scaleX(1.0108);">Win32</div>
<div class="t" style="left:11.2px;top:87px;font-size:11.7px;color:#f1f1f1;transform-origin:0 50%;transform:scaleX(1.0032);">Solution Explorer</div>
<div class="t" style="left:12px;top:135.5px;font-size:11.7px;color:#999;transform-origin:0 50%;transform:scaleX(0.9943);">Search Solution Explorer (Ctrl+;)</div>
<div class="t" style="left:40.3px;top:159.8px;font-size:11.7px;color:#f1f1f1;transform-origin:0 50%;transform:scaleX(1.0292);">Solution 'Batch Calibration' (1 project)</div>
<div class="t" style="left:58.4px;top:177.8px;font-size:11.7px;color:#f1f1f1;transform-origin:0 50%;transform:scaleX(0.9663);"><b>Batch Calibration</b></div>
<div class="t" style="left:76.3px;top:195.8px;font-size:11.7px;color:#f1f1f1;transform-origin:0 50%;transform:scaleX(0.9722);">External Dependencies</div>
<div class="t" style="left:76.3px;top:213.8px;font-size:11.7px;color:#f1f1f1;transform-origin:0 50%;transform:scaleX(0.9598);">Header Files</div>
<div class="t" style="left:94.2px;top:231.8px;font-size:11.7px;color:#f1f1f1;transform-origin:0 50%;transform:scaleX(0.9869);">stdafx.h</div>
<div class="t" style="left:94.2px;top:249.8px;font-size:11.7px;color:#f1f1f1;transform-origin:0 50%;transform:scaleX(1.0175);">targetver.h</div>
<div class="t" style="left:76.3px;top:267.8px;font-size:11.7px;color:#f1f1f1;transform-origin:0 50%;transform:scaleX(0.9416);">Resource Files</div>
<div class="t" style="left:76.3px;top:285.8px;font-size:11.7px;color:#f1f1f1;transform-origin:0 50%;transform:scaleX(0.9466);">Source Files</div>
<div class="t" style="left:94.4px;top:303.8px;font-size:11.7px;color:#f1f1f1;transform-origin:0 50%;transform:scaleX(1.0275);">ConsoleApplication1.cpp</div>
<div class="t" style="left:94.4px;top:321.8px;font-size:11.7px;color:#f1f1f1;transform-origin:0 50%;transform:scaleX(1.0004);">stdafx.cpp</div>
<div class="t" style="left:76.3px;top:339.8px;font-size:11.7px;color:#f1f1f1;transform-origin:0 50%;transform:scaleX(0.9755);">ReadMe.txt</div>
<div class="t" style="left:11.9px;top:678px;font-size:11.7px;color:#0097fb;transform-origin:0 50%;transform:scaleX(0.9909);">Solution Explo...</div>
<div class="t" style="left:107.5px;top:678.5px;font-size:11.7px;color:#d0d0d0;transform-origin:0 50%;transform:scaleX(0.9463);">Class View</div>
<div class="t" style="left:172.4px;top:678.5px;font-size:11.7px;color:#d0d0d0;transform-origin:0 50%;transform:scaleX(1.0037);">Property Man...</div>
<div class="t" style="left:269px;top:678.5px;font-size:11.7px;color:#d0d0d0;transform-origin:0 50%;transform:scaleX(0.9846);">Team Explorer</div>
<div class="t" style="left:358.8px;top:85.8px;font-size:11.7px;color:#fff;transform-origin:0 50%;transform:scaleX(1.0260);">ConsoleApplication1.cpp</div>
<div class="t" style="left:1234px;top:86.6px;font-size:11.7px;color:#f1f1f1;transform-origin:0 50%;transform:scaleX(1.0282);">string</div>
<div class="t" style="left:376.4px;top:106.5px;font-size:11.7px;color:#f1f1f1;transform-origin:0 50%;transform:scaleX(1.0144);">Batch Calibration</div>
<div class="t" style="left:703px;top:106.5px;font-size:11.7px;color:#f1f1f1;transform-origin:0 50%;transform:scaleX(0.9812);">(Global Scope)</div>
<div class="t" style="left:1030.5px;top:106.5px;font-size:11.7px;color:#f1f1f1;transform-origin:0 50%;transform:scaleX(1.0264);">main()</div>
<div class="t" style="left:357.7px;top:481.8px;font-size:11px;color:#f1f1f1;transform-origin:0 50%;transform:scaleX(0.9903);">100 %</div>
<div class="t" style="left:359.3px;top:508.5px;font-size:11.7px;color:#f1f1f1;transform-origin:0 50%;transform:scaleX(1.0743);">Output</div>
<div class="t" style="left:362px;top:533px;font-size:11.7px;color:#f1f1f1;transform-origin:0 50%;transform:scaleX(1.0468);"><u>S</u>how output from:</div>
<div class="t" style="left:472.5px;top:533px;font-size:11.7px;color:#f1f1f1;transform-origin:0 50%;transform:scaleX(0.9956);">Debug</div>
<div class="t" style="left:0px;top:-10px;font-size:11.7px;color:#d0d0d0;left:1358.5px;top:86px;transform-origin:0 0;transform:rotate(90deg) scaleX(0.9335);">Server Explorer</div>
<div class="t" style="left:0px;top:-10px;font-size:11.7px;color:#d0d0d0;left:1358.5px;top:174.8px;transform-origin:0 0;transform:rotate(90deg) scaleX(1.0472);">Toolbox</div>
<div class="t" style="left:0px;top:-10px;font-size:11.7px;color:#d0d0d0;left:1358.5px;top:229.5px;transform-origin:0 0;transform:rotate(90deg) scaleX(0.9760);">Properties</div>
<div class="t" style="left:4.2px;top:706.5px;font-size:11.7px;color:#fff;transform-origin:0 50%;transform:scaleX(0.9350);">Ready</div>
<div class="t" style="left:1012.6px;top:706.5px;font-size:11.7px;color:#fff;transform-origin:0 50%;transform:scaleX(0.9504);">Ln 44</div>
<div class="t" style="left:1104.4px;top:706.5px;font-size:11.7px;color:#fff;transform-origin:0 50%;transform:scaleX(0.9646);">Col 13</div>
<div class="t" style="left:1196.3px;top:706.5px;font-size:11.7px;color:#fff;transform-origin:0 50%;transform:scaleX(0.9594);">Ch 4</div>
<div class="t" style="left:1332.2px;top:706.5px;font-size:11.7px;color:#fff;transform-origin:0 50%;transform:scaleX(0.9136);">INS</div>
</body></html>
